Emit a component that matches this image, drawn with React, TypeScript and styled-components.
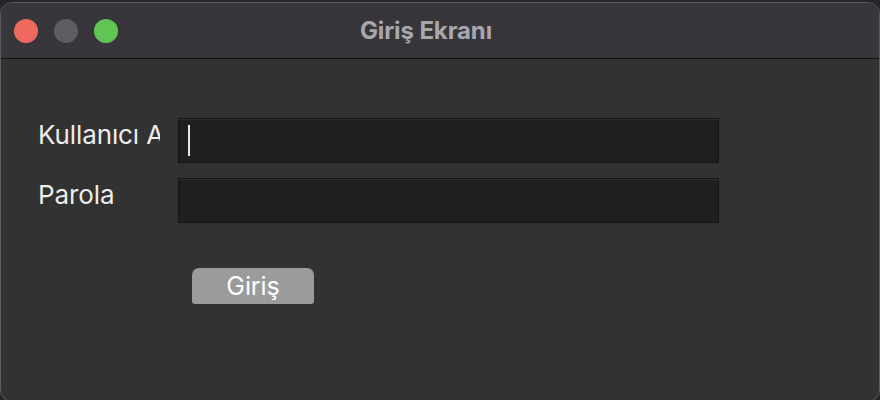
import React from "react";
import styled, { createGlobalStyle } from "styled-components";

const Global = createGlobalStyle`
  html, body { margin: 0; padding: 0; background: #26262a; }
  body { font-family: Inter, "Noto Sans", sans-serif; overflow: hidden; }
`;

const Screen = styled.div`
  width: 880px;
  height: 400px;
  padding-top: 2px;
  box-sizing: border-box;
`;

const Window = styled.div`
  height: 400px;
  box-sizing: border-box;
  border: 1px solid #5c5b60;
  border-radius: 12px;
  overflow: hidden;
  background: #323232;
  display: flex;
  flex-direction: column;
`;

const TitleBar = styled.div`
  height: 55px;
  flex: none;
  background: #38363b;
  border-bottom: 1px solid #121214;
  display: grid;
  grid-template-columns: 1fr auto 1fr;
  align-items: center;
  padding: 0 13px;
`;

const Lights = styled.div`
  display: flex;
  gap: 16px;
  align-items: center;
`;

const Light = styled.span<{ $c: string }>`
  width: 24px;
  height: 24px;
  border-radius: 50%;
  background: ${(p) => p.$c};
`;

const Title = styled.div`
  font-size: 24px;
  font-weight: 700;
  color: #a9a7ae;
  letter-spacing: -0.1px;
  transform: translateX(-14px);
`;

const Content = styled.div`
  flex: 1;
  padding: 59px 0 0 37px;
  display: flex;
  flex-direction: column;
`;

const Form = styled.div`
  display: grid;
  grid-template-columns: 122px 541px;
  column-gap: 18px;
  row-gap: 15px;
`;

const Label = styled.div`
  font-size: 26px;
  color: #ececec;
  white-space: nowrap;
  overflow: hidden;
  padding-top: 2px;
  line-height: 30px;
  letter-spacing: -0.1px;
`;

const Field = styled.div`
  height: 45px;
  box-sizing: border-box;
  background: #1f1f1f;
  border: 1px solid #161616;
  box-shadow: inset 0 1px 0 #2e2e2e;
  display: flex;
  align-items: center;
  padding-left: 9px;
`;

const Caret = styled.span`
  width: 2px;
  height: 31px;
  background: #e6e6e6;
`;

const Button = styled.button`
  margin: 45px 0 0 154px;
  width: 122px;
  height: 36px;
  border: none;
  border-radius: 7px 7px 3px 3px;
  background: #9b9b9b;
  color: #ffffff;
  font-family: Inter, "Noto Sans", sans-serif;
  font-size: 25px;
  line-height: 36px;
  padding: 0;
  letter-spacing: -0.1px;
`;

export default function App() {
  return (
    <Screen>
      <Global />
      <Window>
        <TitleBar>
          <Lights>
            <Light $c="#ee6a5f" />
            <Light $c="#5f5c63" />
            <Light $c="#61c554" />
          </Lights>
          <Title>Giriş Ekranı</Title>
          <div />
        </TitleBar>
        <Content>
          <Form>
            <Label>Kullanıcı Adı</Label>
            <Field>
              <Caret />
            </Field>
            <Label>Parola</Label>
            <Field />
          </Form>
          <div>
            <Button>Giriş</Button>
          </div>
        </Content>
      </Window>
    </Screen>
  );
}
